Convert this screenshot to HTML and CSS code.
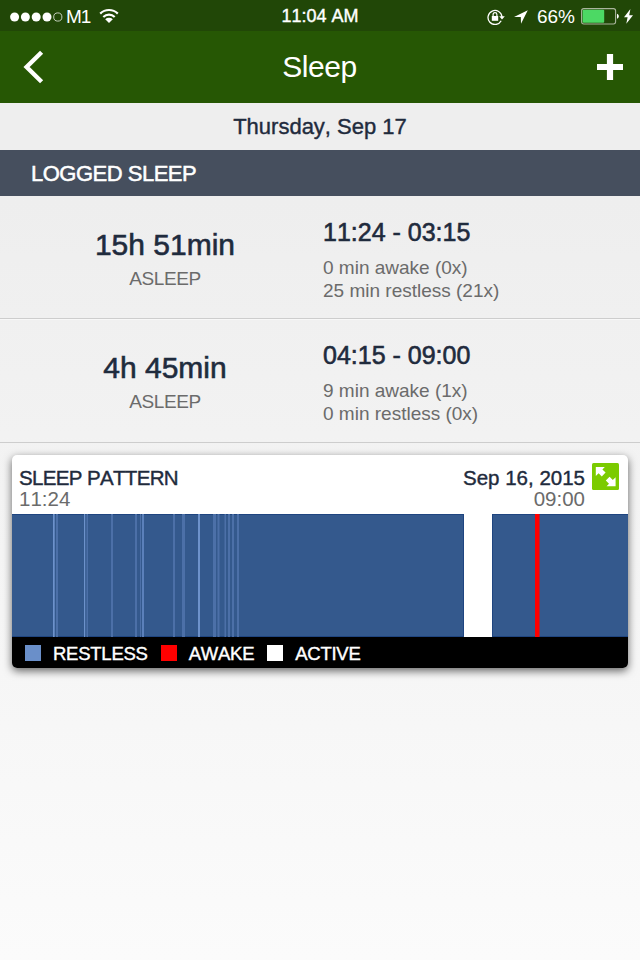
FILE: index.html
```html
<!DOCTYPE html>
<html lang="en">
<head>
    <meta charset="UTF-8">
    <meta name="viewport" content="width=device-width, initial-scale=1.0">
    <title>Sleep</title>
    <link rel="stylesheet" href="styles.css">
</head>
<body>
    <div class="status-bar">
        <div class="status-left">
            <svg class="signal" width="54" height="12" viewBox="0 0 54 12">
                <g fill="#fff">
                    <circle cx="4.6" cy="6" r="4.5"/>
                    <circle cx="15.4" cy="6" r="4.5"/>
                    <circle cx="26.2" cy="6" r="4.5"/>
                    <circle cx="37" cy="6" r="4.5"/>
                </g>
                <circle cx="47.8" cy="6" r="4.1" fill="none" stroke="#d5dccf" stroke-width="0.9"/>
            </svg>
            <span class="carrier">M1</span>
            <svg class="wifi" width="20" height="16" viewBox="0 0 20 16">
                <g fill="none" stroke="#fff" stroke-width="2.2">
                    <path d="M1.2 5.6a12.6 12.6 0 0 1 17.6 0"/>
                    <path d="M4.3 9a8.2 8.2 0 0 1 11.4 0"/>
                </g>
                <path d="M6.2 11.2a5.6 5.6 0 0 1 7.6 0L10 15z" fill="#fff"/>
            </svg>
        </div>
        <span class="clock">11:04 AM</span>
        <div class="status-right">
            <svg class="lock" width="18" height="16" viewBox="0 0 18 16">
                <path d="M14.2 11.8A7 7 0 1 1 15 8" fill="none" stroke="#fff" stroke-width="1.3"/>
                <path d="M12.2 7.2h5.6L15 10.6z" fill="#fff"/>
                <rect x="4.8" y="7" width="6.4" height="4.8" fill="#fff"/>
                <path d="M6.1 7V5.5a1.9 1.9 0 0 1 3.8 0V7" fill="none" stroke="#fff" stroke-width="1.2"/>
            </svg>
            <svg class="location" width="14" height="14" viewBox="0 0 14 14">
                <path d="M13.8.2L0 7h6.8l.2 6.8z" fill="#fff"/>
            </svg>
            <span class="percent">66%</span>
            <svg class="battery" width="38" height="17" viewBox="0 0 38 17">
                <rect x=".6" y=".6" width="34" height="15.4" rx="2.2" fill="none" stroke="#a9b49c" stroke-width="1.1"/>
                <rect x="1.6" y="1.8" width="21.6" height="13" rx="1" fill="#4cd964"/>
                <path d="M36 5.8c2.4.8 2.4 4.2 0 5z" fill="#fff"/>
            </svg>
            <svg class="bolt" width="9" height="15" viewBox="0 0 9 15">
                <path d="M6.4 0L0 8.2h3.6L2.3 14.8 9 6.2H5.2z" fill="#fff"/>
            </svg>
        </div>
    </div>

    <header class="navbar">
        <svg width="21" height="34" viewBox="0 0 21 34">
            <path d="M18.6 2.2L3.6 17l15 14.8" fill="none" stroke="#fff" stroke-width="4.4"/>
        </svg>
        <h1>Sleep</h1>
        <svg width="26" height="26" viewBox="0 0 26 26">
            <path d="M13 0v26M0 13h26" fill="none" stroke="#fff" stroke-width="6.2"/>
        </svg>
    </header>

    <div class="date">Thursday, Sep 17</div>
    <h2 class="section-title">LOGGED SLEEP</h2>

    <div class="entry">
        <div class="duration">
            <div class="total">15h 51min</div>
            <div class="state">ASLEEP</div>
        </div>
        <div class="details">
            <div class="range">11:24 - 03:15</div>
            <p>0 min awake (0x)</p>
            <p>25 min restless (21x)</p>
        </div>
    </div>
    <div class="entry">
        <div class="duration">
            <div class="total">4h 45min</div>
            <div class="state">ASLEEP</div>
        </div>
        <div class="details">
            <div class="range">04:15 - 09:00</div>
            <p>9 min awake (1x)</p>
            <p>0 min restless (0x)</p>
        </div>
    </div>

    <div class="card">
        <div class="card-head">
            <div class="card-start">
                <h3>SLEEP PATTERN</h3>
                <span class="time">11:24</span>
            </div>
            <div class="card-end">
                <h3>Sep 16, 2015</h3>
                <span class="time">09:00</span>
            </div>
            <svg class="expand" width="27" height="27" viewBox="0 0 27 27">
                <rect width="27" height="27" rx="1.5" fill="#7bcb00"/>
                <path d="M3.8 4h9L10.4 6.4l3.2 3.2-3.8 3.8-3.2-3.2-2.8 2.8z" fill="#fff"/>
                <path d="M23.6 23.2h-9l2.4-2.4-3.2-3.2 3.8-3.8 3.2 3.2 2.8-2.8z" fill="#fff"/>
            </svg>
        </div>
        <svg class="chart" width="616" height="123" viewBox="0 0 616 123">
            <rect width="452" height="123" fill="#34598d"/>
            <rect x="480" width="136" height="123" fill="#34598d"/>
            <path d="M0 .5h452M480 .5h136M0 122.5h452M480 122.5h136M451.5 0v123M480.5 0v123" stroke="#1f4580" fill="none"/>
            <!-- restless -->
            <g fill="#4c70a8">
                <rect x="44" width="2" height="123"/>
                <rect x="74.5" width="1.5" height="123"/>
                <rect x="99" width="2" height="123"/>
                <rect x="123" width="2" height="123"/>
                <rect x="128" width="1" height="123"/>
                <rect x="161" width="2" height="123"/>
                <rect x="170" width="3" height="123"/>
                <rect x="201" width="3" height="123"/>
                <rect x="205.5" width="2" height="123"/>
                <rect x="212.5" width="1.5" height="123"/>
                <rect x="216" width="2" height="123"/>
                <rect x="220" width="2" height="123"/>
                <rect x="225" width="2" height="123"/>
            </g>
            <g fill="#6d92cb">
                <rect x="41" width="1.7" height="123"/>
                <rect x="72" width="1.2" height="123"/>
                <rect x="130" width="2" height="123" fill="#5b80ba"/>
                <rect x="186" width="2" height="123"/>
            </g>
            <!-- awake -->
            <rect x="523" width="4.5" height="123" fill="#f00"/>
        </svg>
        <div class="legend">
            <span class="swatch restless"></span><span class="label">RESTLESS</span>
            <span class="swatch awake"></span><span class="label">AWAKE</span>
            <span class="swatch active"></span><span class="label">ACTIVE</span>
        </div>
    </div>
</body>
</html>
```
FILE: styles.css
```css
* {
    margin: 0;
    padding: 0;
    box-sizing: border-box;
}

body {
    min-height: 100vh;
    font-family: "Liberation Sans", Arial, sans-serif;
    font-kerning: none;
    color: #1f2b3d;
    background: linear-gradient(#eeeeee 200px, #fbfbfb 960px);
}

svg {
    display: block;
    flex: none;
}

.status-bar {
    display: grid;
    grid-template-columns: 1fr auto 1fr;
    align-items: center;
    height: 31px;
    padding: 0 7px 0 10px;
    background: #214707;
    color: #fff;
    line-height: 31px;
}

.status-left,
.status-right {
    display: flex;
    align-items: center;
}

.status-right {
    justify-content: flex-end;
}

.carrier {
    margin-left: 2px;
    font-size: 19px;
    letter-spacing: -1px;
}

.wifi {
    margin-left: 9px;
    margin-bottom: 2px;
}

.clock {
    padding-right: 3px;
    font-size: 18px;
    line-height: 33px;
    -webkit-text-stroke: 0.4px;
}

.location {
    margin-left: 9px;
}

.percent {
    margin-left: 9px;
    font-size: 19px;
}

.battery {
    margin-left: 6px;
}

.bolt {
    margin-left: 5px;
}

.navbar {
    display: flex;
    align-items: center;
    justify-content: space-between;
    height: 72px;
    padding: 0 17px 0 23px;
    background: #265704;
    color: #fff;
}

.navbar h1 {
    padding-right: 2px;
    font-size: 30px;
    font-weight: normal;
    line-height: 72px;
    letter-spacing: -0.4px;
}

.date {
    height: 47px;
    line-height: 48px;
    font-size: 22px;
    text-align: center;
    -webkit-text-stroke: 0.4px;
}

.section-title {
    height: 46px;
    padding-left: 31px;
    background: #464f5e;
    color: #fff;
    font-size: 22px;
    font-weight: normal;
    line-height: 47px;
    letter-spacing: -0.5px;
    -webkit-text-stroke: 0.5px;
}

.entry {
    display: flex;
    height: 123px;
    border-bottom: 1px solid #cdcdcd;
}

.entry + .entry {
    height: 124px;
    border-top: 1px solid #f8f8f8;
}

.duration {
    width: 323px;
    padding: 32px 0 0 7px;
    text-align: center;
}

.total {
    font-size: 30px;
    line-height: 34px;
    -webkit-text-stroke: 0.6px;
}

.state {
    margin-top: 6px;
    color: #6b6b6b;
    font-size: 19px;
    line-height: 22px;
    letter-spacing: -0.4px;
}

.details {
    padding-top: 21px;
    color: #6b6b6b;
    font-size: 19px;
    line-height: 23px;
}

.range {
    margin-bottom: 9px;
    color: #1f2b3d;
    font-size: 25px;
    line-height: 30px;
    -webkit-text-stroke: 0.6px;
}

.entry + .entry .duration {
    padding-top: 31px;
}

.entry + .entry .details {
    padding-top: 20px;
}

.card {
    margin: 12px 12px 0;
    overflow: hidden;
    border-radius: 5px;
    background: #fff;
    box-shadow: 0 3px 8px rgba(0, 0, 0, 0.6);
}

.card-head {
    display: flex;
    height: 59px;
    padding: 12px 9px 0 7px;
    line-height: 21px;
}

.card-head h3 {
    font-size: 20.5px;
    font-weight: normal;
    -webkit-text-stroke: 0.4px;
}

.card-start h3 {
    letter-spacing: -0.65px;
}

.time {
    display: block;
    color: #6b6b6b;
    font-size: 20.5px;
}

.card-end {
    margin-left: auto;
    text-align: right;
}

.expand {
    margin: -4px 0 0 7px;
}

.legend {
    display: flex;
    align-items: center;
    height: 31px;
    padding-left: 13px;
    background: #000;
    color: #fff;
    font-size: 18.5px;
    line-height: 33px;
    letter-spacing: -0.25px;
    -webkit-text-stroke: 0.4px;
}

.swatch {
    width: 16px;
    height: 16px;
    margin-right: 12px;
}

.label {
    margin-right: 13px;
    padding-top: 1px;
}

.restless {
    background: #6a8fc9;
}

.awake {
    background: #f00;
}

.active {
    background: #fff;
}
```
